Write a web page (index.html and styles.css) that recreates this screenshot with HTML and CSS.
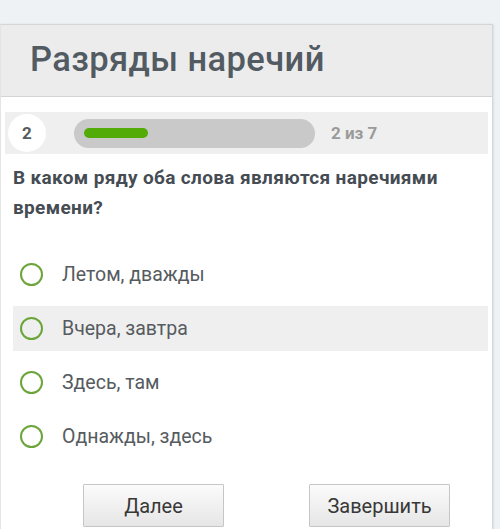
FILE: index.html
```html
<!DOCTYPE html>
<html lang="ru">
<head>
<meta charset="utf-8">
<link rel="stylesheet" href="styles.css">
</head>
<body>
<div class="page">
  <div class="card">
    <div class="header"><h1 class="title">Разряды наречий</h1></div>
    <div class="content">
      <div class="progress-row">
        <div class="num">2</div>
        <div class="track"><div class="fill"></div></div>
        <div class="count">2 из 7</div>
      </div>
      <div class="question">В каком ряду оба слова являются наречиями времени?</div>
      <div class="options">
        <div class="option"><span class="radio"></span><span class="label">Летом, дважды</span></div>
        <div class="option hl"><span class="radio"></span><span class="label">Вчера, завтра</span></div>
        <div class="option"><span class="radio"></span><span class="label">Здесь, там</span></div>
        <div class="option"><span class="radio"></span><span class="label">Однажды, здесь</span></div>
      </div>
      <div class="buttons">
        <button class="btn">Далее</button>
        <button class="btn btn-finish">Завершить</button>
      </div>
    </div>
  </div>
</div>
</body>
</html>
```
FILE: styles.css
```css
html, body {
  margin: 0;
  padding: 0;
  background: #eff2f4;
  font-family: Roboto, "Liberation Sans", sans-serif;
  overflow: hidden;
}
.page {
  padding-top: 24px;
  height: 505px;
}
.card {
  width: 491px;
  height: 520px;
  background: #ffffff;
  border: 1px solid #d6d6d6;
  border-left-color: #e4e4e4;
  box-shadow: 1px 0 2px rgba(0,0,0,0.08);
}
.header {
  height: 71px;
  background: #ececec;
  border-bottom: 1px solid #d4d4d4;
  display: flex;
  align-items: center;
  padding-left: 29px;
}
.title {
  margin: 0;
  font-size: 34.5px;
  font-weight: 500;
  color: #525a62;
  letter-spacing: 0.4px;
  position: relative;
  top: -2px;
}
.content {
  padding: 15px 4px 0 4px;
}
.progress-row {
  height: 42px;
  background: #efefef;
  display: flex;
  align-items: center;
}
.num {
  width: 38px;
  height: 38px;
  margin-left: 3px;
  border-radius: 50%;
  background: #ffffff;
  display: flex;
  align-items: center;
  justify-content: center;
  font-weight: 700;
  font-size: 17px;
  color: #555b61;
}
.track {
  margin-left: 28px;
  width: 241px;
  height: 29px;
  border-radius: 15px;
  background: #c9c9c9;
  display: flex;
  align-items: center;
}
.fill {
  margin-left: 10px;
  width: 64px;
  height: 10px;
  border-radius: 5px;
  background: #53ab08;
}
.count {
  margin-left: 16px;
  font-weight: 700;
  font-size: 17px;
  color: #9a9a9a;
}
.question {
  margin-top: 9px;
  padding-left: 8px;
  padding-right: 20px;
  font-weight: 700;
  font-size: 19px;
  letter-spacing: 0.35px;
  line-height: 30px;
  color: #454c53;
}
.options {
  margin-top: 29px;
  display: flex;
  flex-direction: column;
  gap: 9px;
}
.option {
  height: 45px;
  margin-left: 8px;
  display: flex;
  align-items: center;
  padding-left: 7px;
}
.option.hl {
  background: #efefef;
}
.radio {
  width: 19px;
  height: 19px;
  border: 2.5px solid #6ba53a;
  border-radius: 50%;
  flex: none;
}
.label {
  margin-left: 19px;
  font-size: 19.5px;
  color: #565b60;
}
.buttons {
  margin-top: 25px;
  display: flex;
  padding-left: 78px;
  gap: 85px;
}
.btn {
  width: 141px;
  height: 43px;
  border: 1px solid #c6c6c6;
  border-radius: 1px;
  background: linear-gradient(#fbfbfb, #e6e6e6);
  font-family: Roboto, "Liberation Sans", sans-serif;
  font-size: 20px;
  color: #383838;
  padding: 0;
}
```
